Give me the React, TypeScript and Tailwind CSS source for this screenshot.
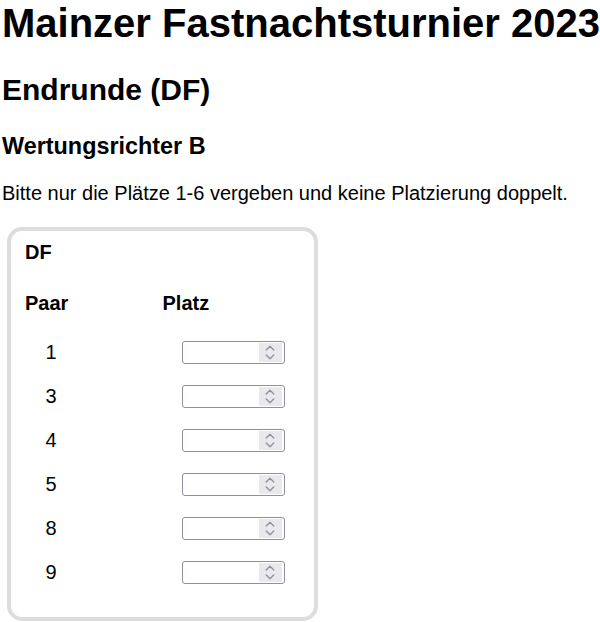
const pairs = [1, 3, 4, 5, 8, 9];

function Spinner() {
  return (
    <div className="flex h-full w-[23px] flex-col items-center justify-center gap-[3px] bg-[#e9e9ed]">
      <svg width="10" height="6" viewBox="0 0 10 6" fill="none">
        <path d="M1.2 5 5 1.2 8.8 5" stroke="#8f8f9d" strokeWidth="1.3" strokeLinecap="round" strokeLinejoin="round" />
      </svg>
      <svg width="10" height="6" viewBox="0 0 10 6" fill="none">
        <path d="M1.2 1 5 4.8 8.8 1" stroke="#8f8f9d" strokeWidth="1.3" strokeLinecap="round" strokeLinejoin="round" />
      </svg>
    </div>
  );
}

function NumberInput({ label }: { label: string }) {
  return (
    <div className="ml-[19px] flex h-[23px] w-[103px] items-stretch rounded-[3px] border border-[#8f8f9d] bg-white py-[1px] pr-[2px]">
      <input
        type="text"
        aria-label={label}
        className="min-w-0 flex-1 bg-transparent px-1 text-[16px] outline-none"
      />
      <Spinner />
    </div>
  );
}

export default function App() {
  return (
    <div className="min-h-screen bg-white pl-[2px] font-['Liberation_Sans',Arial,sans-serif] text-black">
      <h1 className="mb-[27px] text-[40px] font-bold leading-[46px]">Mainzer Fastnachtsturnier 2023</h1>
      <h2 className="mb-[25px] text-[30px] font-bold leading-[34.5px]">Endrunde (DF)</h2>
      <h3 className="mb-[22px] text-[23.4px] font-bold leading-[27px]">Wertungsrichter B</h3>
      <p className="mb-[22px] text-[20px] leading-[23px]">
        Bitte nur die Plätze 1-6 vergeben und keine Platzierung doppelt.
      </p>

      {/* Wertung DF */}
      <div className="ml-[5px] w-[311px] rounded-[15px] border-4 border-[#dddddd] pb-[22px] pl-[14px] pt-[10px]">
        <h4 className="text-[20px] font-bold leading-[23px]">DF</h4>
        <div className="mt-[28px] grid grid-cols-[137.5px_1fr] text-[20px] font-bold leading-[23px]">
          <div>Paar</div>
          <div>Platz</div>
        </div>
        <div className="mt-[16px]">
          {pairs.map((p) => (
            <div key={p} className="grid h-[44px] grid-cols-[137.5px_1fr] items-center">
              <div className="w-[52px] text-center text-[20px] leading-[23px]">{p}</div>
              <NumberInput label={`Platz Paar ${p}`} />
            </div>
          ))}
        </div>
      </div>
    </div>
  );
}
